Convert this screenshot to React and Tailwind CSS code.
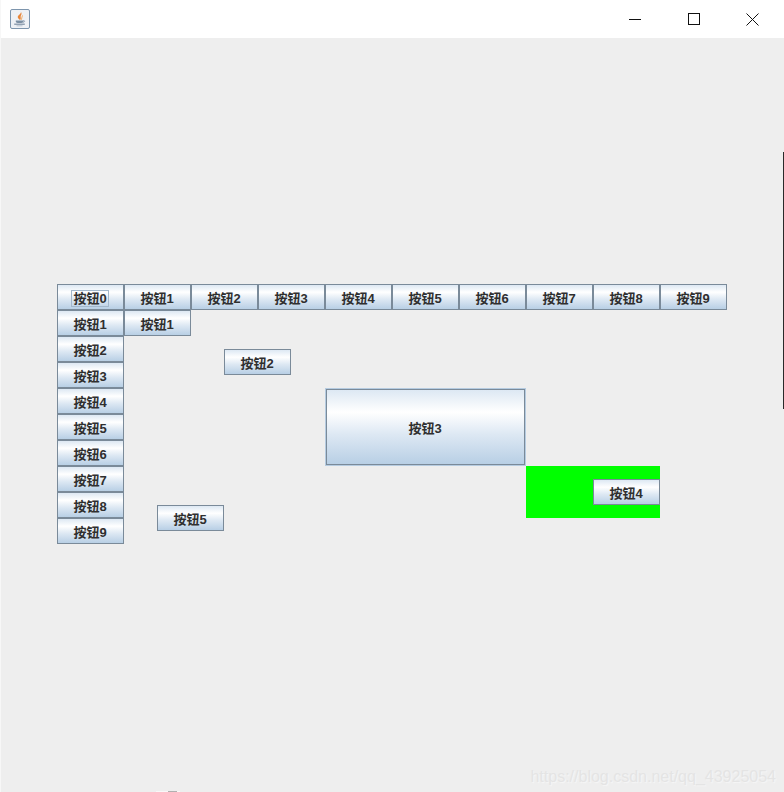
const btnClass =
  "flex h-[26px] w-[67px] items-center justify-center border border-[#7a8a99] bg-[linear-gradient(to_bottom,#dde8f3_0%,#ffffff_30%,#dde8f3_60%,#b8cfe5_100%)] pr-[1px] pt-[3px] text-[13px] font-bold leading-none text-[#2f2f2f]";

function Label({ text, focused }) {
  return (
    <span
      className={
        focused
          ? "whitespace-nowrap outline outline-1 outline-offset-1 outline-[#a3b8cc]"
          : "whitespace-nowrap"
      }
    >
      {text}
    </span>
  );
}

function JavaButton({ text, focused, className = "" }) {
  return (
    <button className={`${btnClass} ${className}`}>
      <Label text={text} focused={focused} />
    </button>
  );
}

function JavaIcon() {
  return (
    <div className="flex h-[20px] w-[20px] items-center justify-center rounded-[2px] border border-[#7d95ad] bg-[#eef1f5]">
      <svg width="16" height="16" viewBox="0 0 16 16">
        <path
          d="M8.8 0.5C10 2.8 5.2 4 5.8 6.6C6.1 7.9 7.6 8.2 8 9.2C9.6 7.6 8.2 6.2 8.8 4.8C9.3 3.6 10.2 2.6 8.8 0.5Z"
          fill="#e8863a"
        />
        <path d="M10.4 3.8C11.2 5 10.2 6.6 10 8.4L8.8 9C9.6 7.2 9.4 5.4 10.4 3.8Z" fill="#f0a860" />
        <path d="M3.8 9.4H11.4V10.8C11.4 11.6 10.2 12 7.6 12C5 12 3.8 11.6 3.8 10.8Z" fill="#7b8fa3" />
        <path d="M11.4 9.6C13 9.3 13.2 11 11.1 11.3" fill="none" stroke="#7b8fa3" strokeWidth="0.8" />
        <path d="M2.2 13.2H12.8" stroke="#7b8fa3" strokeWidth="1.2" />
        <path d="M4.5 14.8H10.5" stroke="#a9b7c5" strokeWidth="0.8" />
      </svg>
    </div>
  );
}

export default function App() {
  const topRow = [0, 1, 2, 3, 4, 5, 6, 7, 8, 9];
  const leftCol = [1, 2, 3, 4, 5, 6, 7, 8, 9];

  return (
    <div
      className="relative flex h-[792px] w-[784px] flex-col overflow-hidden border-l border-[#f7f7f7] bg-[#eeeeee]"
      style={{ fontFamily: '"Liberation Sans", "Noto Sans CJK SC", sans-serif' }}
    >
      {/* title bar */}
      <header className="flex h-[38px] shrink-0 items-center justify-between bg-white pl-[9px] pr-[2px]">
        <JavaIcon />
        <div className="flex items-center">
          <div className="flex h-[38px] w-[59px] items-center justify-center">
            <svg width="12" height="12" viewBox="0 0 12 12">
              <path d="M0 6.5H12" stroke="#111" strokeWidth="1" />
            </svg>
          </div>
          <div className="flex h-[38px] w-[59px] items-center justify-center">
            <svg width="12" height="12" viewBox="0 0 12 12">
              <rect x="0.5" y="0.5" width="11" height="11" fill="none" stroke="#111" strokeWidth="1" />
            </svg>
          </div>
          <div className="flex h-[38px] w-[59px] items-center justify-center">
            <svg width="13" height="13" viewBox="0 0 13 13">
              <path d="M0.5 0.5L12.5 12.5M12.5 0.5L0.5 12.5" stroke="#111" strokeWidth="1" />
            </svg>
          </div>
        </div>
      </header>

      {/* gridbag content */}
      <main className="grid flex-1 grid-cols-[repeat(10,67px)] grid-rows-[repeat(10,26px)] content-start pl-[56px] pt-[246px]">
        {topRow.map((n) => (
          <JavaButton key={n} text={`按钮${n}`} focused={n === 0} />
        ))}
        {leftCol.map((n) => (
          <JavaButton key={n} text={`按钮${n}`} className="col-start-1" />
        ))}
        <JavaButton text="按钮1" className="col-start-2 row-start-2" />
        <div className="col-start-3 col-span-2 row-start-3 row-span-2 flex items-center pl-[33px]">
          <JavaButton text="按钮2" />
        </div>
        <div className="col-start-5 col-span-3 row-start-5 row-span-3 border border-[#b5cbe0]">
          <JavaButton text="按钮3" className="!h-full !w-full" />
        </div>
        <div className="col-start-8 col-span-2 row-start-8 row-span-2 flex items-center justify-end bg-[#00ff00]">
          <JavaButton text="按钮4" />
        </div>
        <div className="col-start-2 col-span-2 row-start-9 row-span-2 flex items-center pl-[33px]">
          <JavaButton text="按钮5" />
        </div>
      </main>

      {/* watermark */}
      <div className="absolute bottom-[7px] right-[8px] text-[16px] leading-none text-[#e4e4e4] [text-shadow:1px_1px_1px_#f6f6f6]">
        https://blog.csdn.net/qq_43925054
      </div>

      {/* stray edges of the window behind */}
      <div className="absolute right-0 top-[152px] h-[257px] w-px bg-[#2a2a2a]" />
      <div className="absolute bottom-0 left-[155px] h-px w-[24px] bg-[#f8f8f8]" />
      <div className="absolute bottom-0 left-[167px] h-px w-[9px] bg-[#b0b0b0]" />
      <div className="absolute -left-px top-[74px] h-[11px] w-px bg-[#d8d8d8]" />
      <div className="absolute -left-px top-[127px] h-[3px] w-px bg-[#a8734a]" />
      <div className="absolute -left-px top-[131px] h-[2px] w-px bg-[#333333]" />
      <div className="absolute -left-px top-[136px] h-[4px] w-px bg-[#6fb0d0]" />
    </div>
  );
}
